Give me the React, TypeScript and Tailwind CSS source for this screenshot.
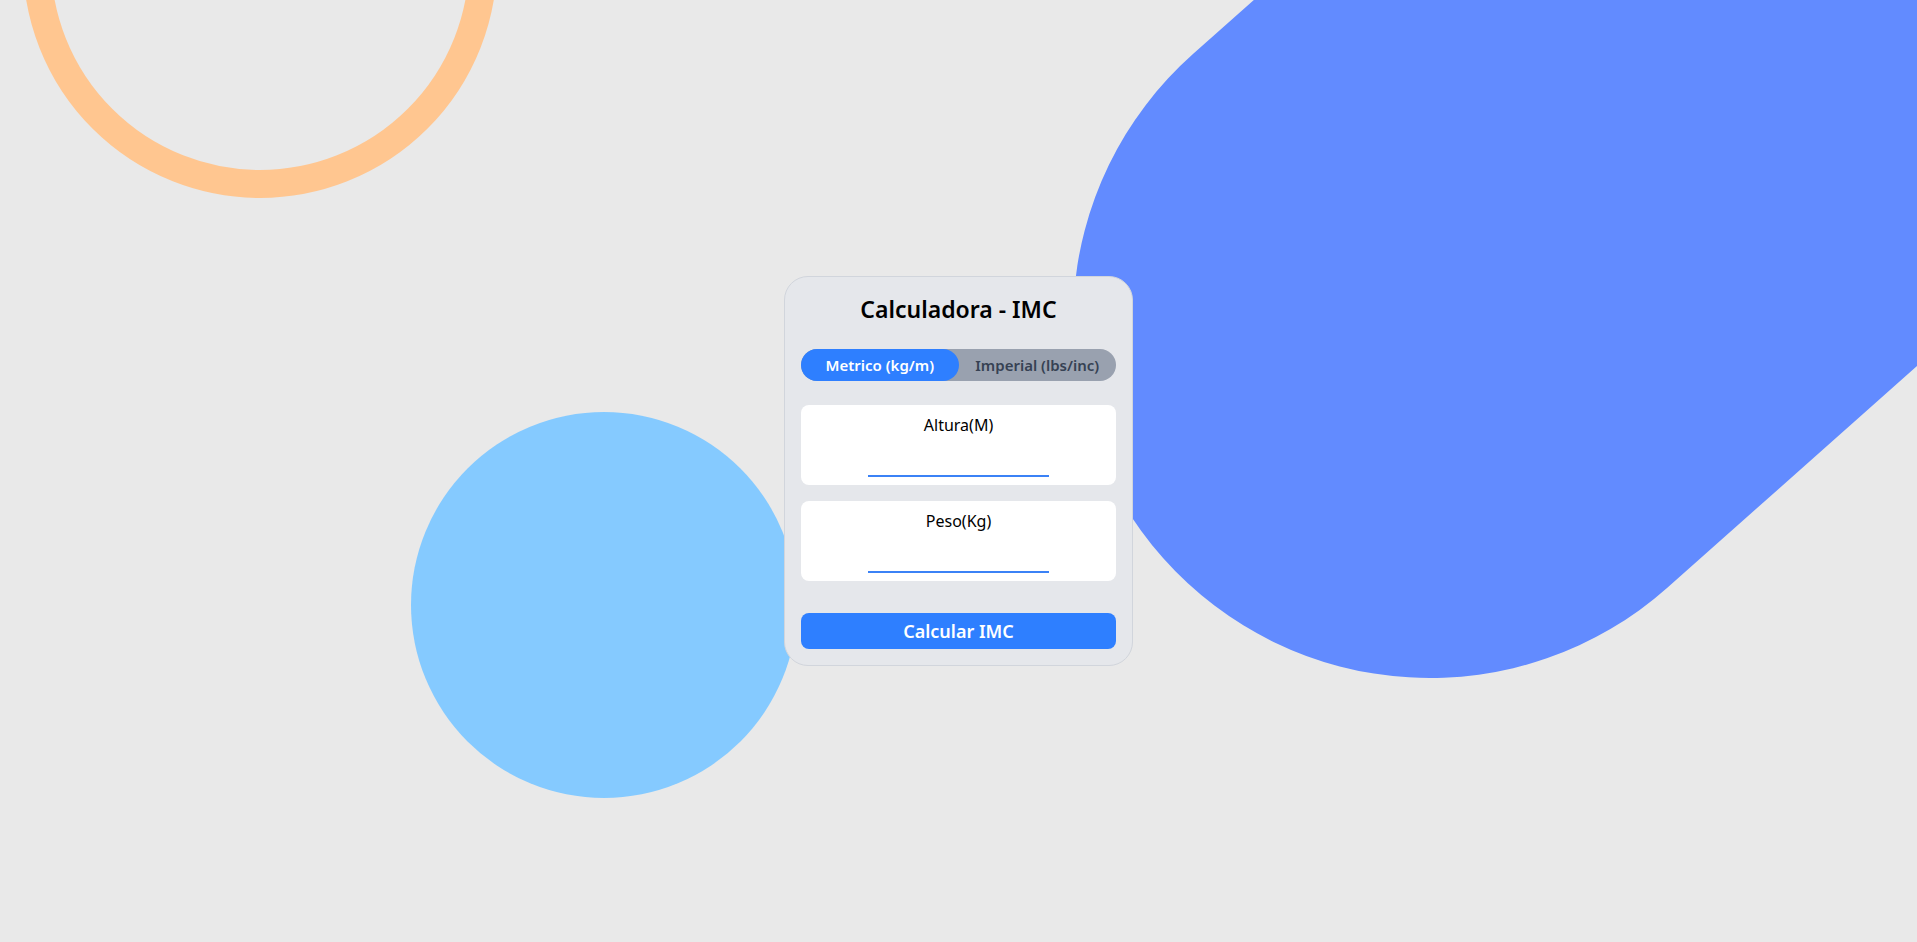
import { useState } from 'react';

export default function App(): JSX.Element {
  const [unit, setUnit] = useState<'metric' | 'imperial'>('metric');

  return (
    <div className="relative h-screen w-full overflow-hidden bg-[#e9e9e9] font-['Noto_Sans',sans-serif]">
      {/* background shapes */}
      <svg className="absolute inset-0 h-full w-full" viewBox="0 0 1917 942" preserveAspectRatio="none">
        <circle cx="260" cy="-39" r="223" fill="none" stroke="#ffc690" strokeWidth="28" />
        <circle cx="604" cy="605" r="193" fill="#85caff" />
        <g transform="translate(1430 321) rotate(-41.6)">
          <rect x="-357" y="-357" width="2200" height="714" rx="357" fill="#628bff" />
        </g>
      </svg>

      <div className="relative flex h-full items-center justify-center">
        <div className="w-[349px] rounded-3xl border border-gray-300 bg-gray-200 p-4">
          <h1 className="text-center text-[23px] leading-8 font-semibold text-black">Calculadora - IMC</h1>

          <div className="mt-6 flex h-8 rounded-full bg-gray-400">
            <button
              onClick={() => setUnit('metric')}
              className={`flex-1 rounded-full text-[15px] font-semibold ${
                unit === 'metric' ? 'bg-[#2e7fff] text-white' : 'text-gray-700'
              }`}
            >
              Metrico (kg/m)
            </button>
            <button
              onClick={() => setUnit('imperial')}
              className={`flex-1 rounded-full text-[15px] font-semibold ${
                unit === 'imperial' ? 'bg-[#2e7fff] text-white' : 'text-gray-700'
              }`}
            >
              Imperial (lbs/inc)
            </button>
          </div>

          <div className="mt-6 flex flex-col gap-4">
            <label className="flex flex-col items-center rounded-lg bg-white px-4 pt-2 pb-2">
              <span className="text-base leading-6 text-black">{unit === 'metric' ? 'Altura(M)' : 'Altura(in)'}</span>
              <input type="text" className="mt-2 h-8 w-[181px] border-b-2 border-[#3b82f6] bg-transparent text-center outline-none" />
            </label>
            <label className="flex flex-col items-center rounded-lg bg-white px-4 pt-2 pb-2">
              <span className="text-base leading-6 text-black">{unit === 'metric' ? 'Peso(Kg)' : 'Peso(lbs)'}</span>
              <input type="text" className="mt-2 h-8 w-[181px] border-b-2 border-[#3b82f6] bg-transparent text-center outline-none" />
            </label>
          </div>

          <button className="mt-8 h-9 w-full rounded-lg bg-[#2e7fff] text-lg font-semibold text-white">Calcular IMC</button>
        </div>
      </div>
    </div>
  );
}
